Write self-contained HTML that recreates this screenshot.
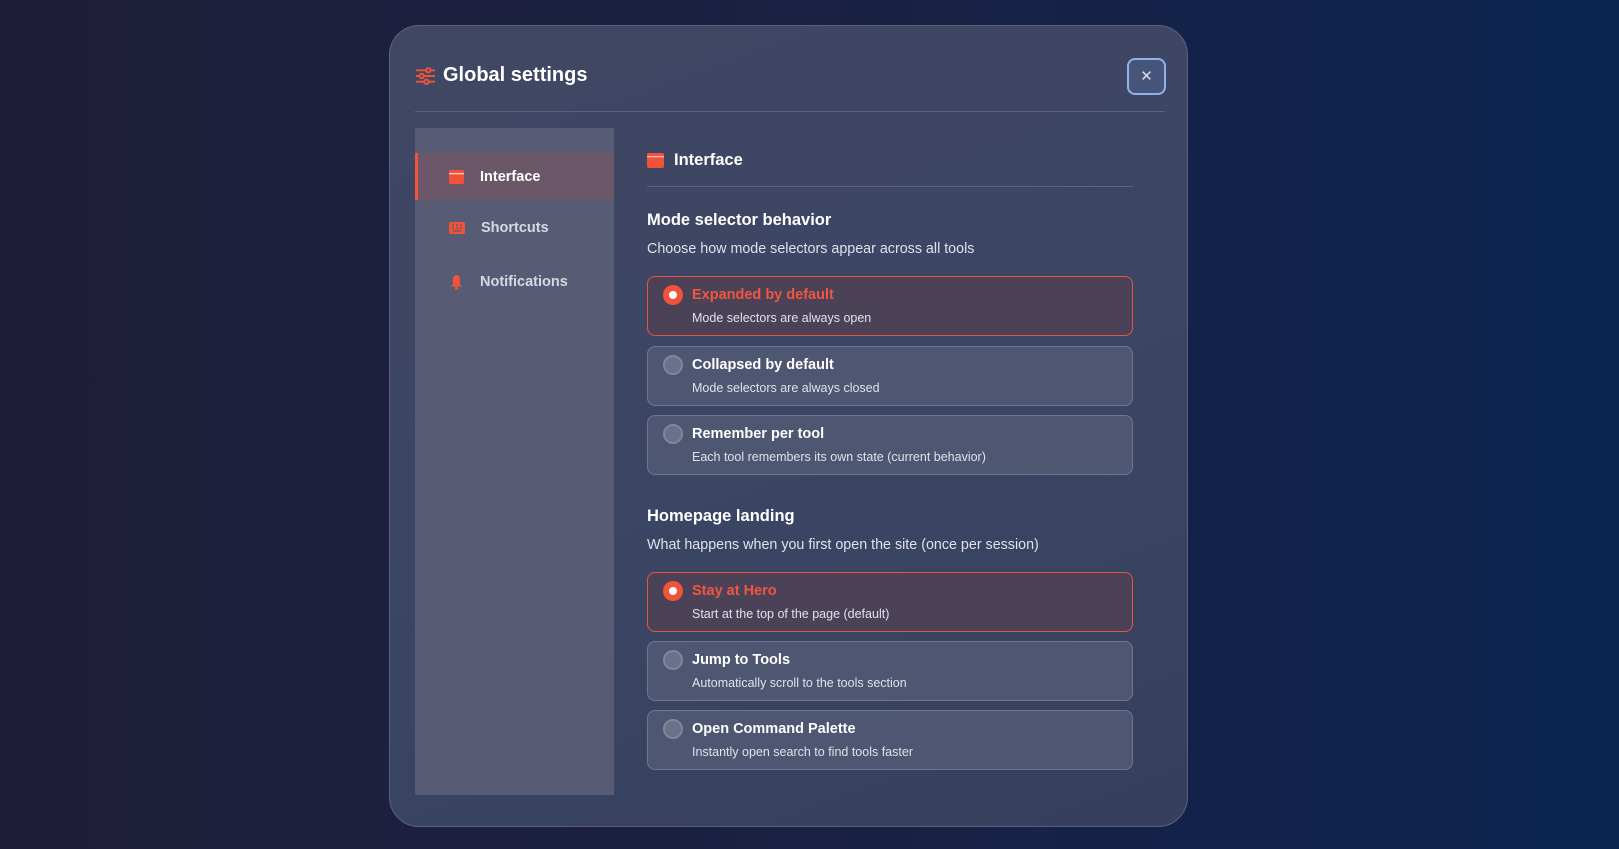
<!DOCTYPE html>
<html><head><meta charset="utf-8"><style>
*{box-sizing:border-box;margin:0;padding:0}
body{width:1619px;height:849px;overflow:hidden;font-family:"Liberation Sans",sans-serif;background:linear-gradient(90deg,#1e1d38 0%,#1a2142 50%,#0b2452 100%);position:relative;color:#fff}
.modal{position:absolute;left:389px;top:25px;width:799px;height:802px;border-radius:30px;background:linear-gradient(160deg,#414763 0%,#3a4564 60%,#363f5d 100%);border:1px solid #5a6280}
.title{position:absolute;left:25px;top:38px;font-size:20px;font-weight:bold;display:flex;align-items:center;gap:7px}
.close{position:absolute;left:737px;top:32px;width:39px;height:37px;border:2px solid #8fb3e6;border-radius:8px;background:#46557a;color:#dde;font-size:15px;text-align:center;line-height:33px}
.hsep{position:absolute;left:25px;top:85px;width:750px;height:1px;background:#57607c}
.side{position:absolute;left:25px;top:102px;width:199px;height:667px;background:#575c74}
.item{position:absolute;left:0;width:199px;height:47px;display:flex;align-items:center;padding-left:34px;gap:16px;font-size:14.5px;font-weight:bold;color:#d7d9e2}
.item.act{background:#6b5767;border-left:3px solid #f0533a;padding-left:31px;color:#fff}
.content{position:absolute;left:257px;top:0;width:486px}
.h{position:absolute;left:0;font-size:16.5px;font-weight:bold;color:#fff}
.d{position:absolute;left:0;font-size:14.3px;color:#dfe2ea}
.opt{position:absolute;left:0;width:486px;height:60px;border:1px solid #6e7792;border-radius:8px;background:#4e5672}
.opt.sel{border-color:#e8543c;background:#4c4258}
.radio{position:absolute;left:15px;top:8px;width:20px;height:20px;border-radius:50%;background:#6b7188;border:2px solid #7f869c}
.sel .radio{background:#f0533a;border-color:#f0533a}
.sel .radio:after{content:"";position:absolute;left:4px;top:4px;width:8px;height:8px;border-radius:50%;background:#fff}
.ot{position:absolute;left:44px;top:10px;font-size:14.5px;font-weight:bold;color:#fff}
.sel .ot{color:#f0563f}
.os{position:absolute;left:44px;top:34px;font-size:12.5px;color:#dfe2ea}
</style></head><body>
<div class="modal">
 <div class="title"><svg width="21" height="20" viewBox="0 0 22 20" fill="none" stroke="#f0533a" stroke-width="2"><path d="M1 4h20M1 10h20M1 16h20"/><circle cx="14" cy="4" r="2.3" fill="#414763"/><circle cx="7" cy="10" r="2.3" fill="#414763"/><circle cx="12" cy="16" r="2.3" fill="#414763"/></svg>Global settings</div>
 <div class="close">✕</div>
 <div class="hsep"></div>
 <div class="side">
  <div class="item act" style="top:25px"><svg width="15" height="14"><rect x="0" y="0" width="15" height="14" rx="2" fill="#f0533a"/><rect x="0" y="3" width="15" height="1.3" fill="#fff" opacity=".7"/></svg>Interface</div>
  <div class="item" style="top:76px"><svg width="16" height="12"><rect x="0" y="0" width="16" height="12" rx="2" fill="#f0533a"/><path d="M3 3h2M7 3h2M11 3h2M3 6h2M7 6h2M11 6h2M4 9h8" stroke="#575c74" stroke-width="1.2"/></svg>Shortcuts</div>
  <div class="item" style="top:130px"><svg width="15" height="16" viewBox="0 0 15 16"><path d="M7.5 1C4.5 1 4 4 4 6v4l-2 2.5h11L11 10V6c0-2-.5-5-3.5-5z" fill="#f0533a"/><circle cx="7.5" cy="14.2" r="1.6" fill="#f0533a"/></svg>Notifications</div>
 </div>
 <div class="content">
  <div class="h" style="top:125px;display:flex;align-items:center;gap:10px"><svg width="17" height="15"><rect width="17" height="15" rx="2" fill="#f0533a"/><rect y="3" width="17" height="1.3" fill="#fff" opacity=".6"/></svg>Interface</div>
  <div style="position:absolute;left:0;top:160px;width:486px;height:1px;background:#5c6580"></div>
  <div class="h" style="top:185px">Mode selector behavior</div>
  <div class="d" style="top:215px">Choose how mode selectors appear across all tools</div>
  <div class="opt sel" style="top:250px"><div class="radio"></div><div class="ot">Expanded by default</div><div class="os">Mode selectors are always open</div></div>
  <div class="opt" style="top:320px"><div class="radio"></div><div class="ot">Collapsed by default</div><div class="os">Mode selectors are always closed</div></div>
  <div class="opt" style="top:389px"><div class="radio"></div><div class="ot">Remember per tool</div><div class="os">Each tool remembers its own state (current behavior)</div></div>
  <div class="h" style="top:481px">Homepage landing</div>
  <div class="d" style="top:511px">What happens when you first open the site (once per session)</div>
  <div class="opt sel" style="top:546px"><div class="radio"></div><div class="ot">Stay at Hero</div><div class="os">Start at the top of the page (default)</div></div>
  <div class="opt" style="top:615px"><div class="radio"></div><div class="ot">Jump to Tools</div><div class="os">Automatically scroll to the tools section</div></div>
  <div class="opt" style="top:684px"><div class="radio"></div><div class="ot">Open Command Palette</div><div class="os">Instantly open search to find tools faster</div></div>
 </div>
</div>
</body></html>
